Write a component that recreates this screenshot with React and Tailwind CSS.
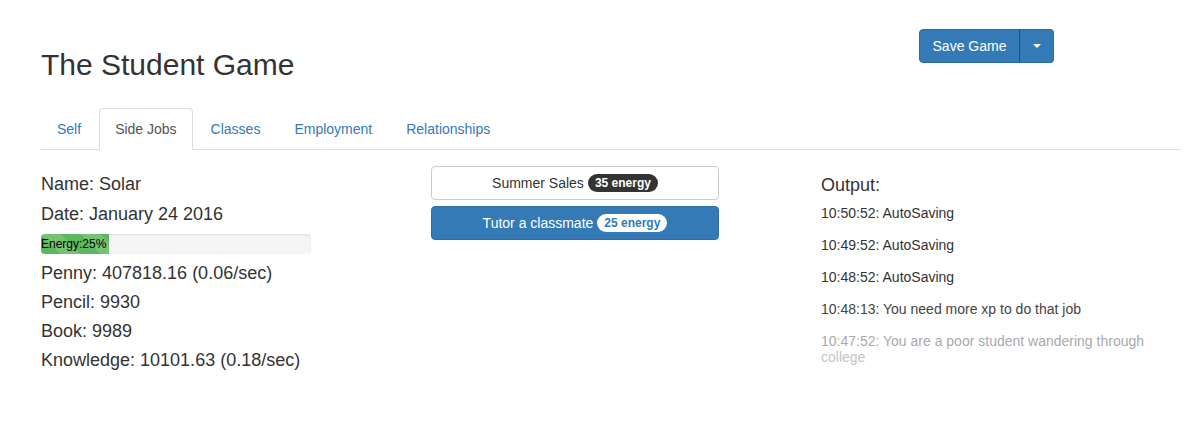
const tabs = ["Self", "Side Jobs", "Classes", "Employment", "Relationships"];

const stats = [
  "Penny: 407818.16 (0.06/sec)",
  "Pencil: 9930",
  "Book: 9989",
  "Knowledge: 10101.63 (0.18/sec)",
];

const log = [
  { text: "10:50:52: AutoSaving", color: "text-[#333]" },
  { text: "10:49:52: AutoSaving", color: "text-[#333]" },
  { text: "10:48:52: AutoSaving", color: "text-[#333]" },
  { text: "10:48:13: You need more xp to do that job", color: "text-[#444]" },
];

const App = () => {
  return (
    <div className="w-[1200px] h-[438px] bg-white text-[#333] font-['Liberation_Sans',Arial,sans-serif] text-[14px] leading-[20px] overflow-hidden">
      <div className="ml-[41px] w-[1140px]">
        <div className="relative h-[108px]">
          <h1 className="absolute left-0 top-[48px] text-[30px] leading-[33px] font-normal">
            The Student Game
          </h1>
          <div className="absolute left-[878px] top-[29px] flex">
            <button className="h-[34px] w-[101px] bg-[#337ab7] border border-[#2e6da4] text-white rounded-l-[4px]">
              Save Game
            </button>
            <button className="h-[34px] w-[35px] bg-[#337ab7] border border-[#2e6da4] border-l-[#204d74] -ml-px text-white rounded-r-[4px] flex items-center justify-center">
              <span className="w-0 h-0 border-l-[4px] border-r-[4px] border-t-[4px] border-l-transparent border-r-transparent border-t-white"></span>
            </button>
          </div>
        </div>

        <ul className="flex border-b border-[#ddd] h-[42px]">
          {tabs.map((t) => (
            <li key={t} className="mr-[2px] -mb-px">
              {t === "Side Jobs" ? (
                <span className="block px-[15px] py-[10px] border border-[#ddd] border-b-white bg-white rounded-t-[4px] text-[#555]">
                  {t}
                </span>
              ) : (
                <span className="block px-[15px] py-[10px] border border-transparent text-[#337ab7]">
                  {t}
                </span>
              )}
            </li>
          ))}
        </ul>

        <div className="flex pt-[16px]">
          <div className="w-[390px] pt-[8px]">
            <div className="text-[18px] leading-[20px]">Name: Solar</div>
            <div className="text-[18px] leading-[20px] mt-[10px]">Date: January 24 2016</div>
            <div className="mt-[10px] w-[270px] h-[20px] bg-[#f5f5f5] rounded-[4px] overflow-hidden shadow-[inset_0_1px_2px_rgba(0,0,0,0.1)]">
              <div className="w-[25%] h-full bg-[#5cb85c] bg-[linear-gradient(45deg,rgba(255,255,255,0.15)_25%,transparent_25%,transparent_50%,rgba(255,255,255,0.15)_50%,rgba(255,255,255,0.15)_75%,transparent_75%,transparent)] bg-[length:40px_40px] text-[12px] leading-[20px] text-black whitespace-nowrap">
                Energy:25%
              </div>
            </div>
            <div className="mt-[9px] flex flex-col gap-[9px]">
              {stats.map((s) => (
                <div key={s} className="text-[18px] leading-[20px]">
                  {s}
                </div>
              ))}
            </div>
          </div>

          <div className="w-[390px] flex flex-col gap-[6px]">
            <button className="w-[288px] h-[34px] border border-[#ccc] bg-white rounded-[4px] flex items-center justify-center gap-[4px] text-[#333]">
              Summer Sales
              <span className="bg-[#333] text-white text-[12px] font-bold leading-[12px] px-[7px] py-[3px] rounded-[10px]">
                35 energy
              </span>
            </button>
            <button className="w-[288px] h-[34px] border border-[#2e6da4] bg-[#337ab7] rounded-[4px] flex items-center justify-center gap-[4px] text-white">
              Tutor a classmate
              <span className="bg-white text-[#337ab7] text-[12px] font-bold leading-[12px] px-[7px] py-[3px] rounded-[10px]">
                25 energy
              </span>
            </button>
          </div>

          <div className="w-[350px] pt-[9px]">
            <div className="text-[18px] leading-[20px]">Output:</div>
            <div className="mt-[10px] flex flex-col gap-[16px]">
              {log.map((l) => (
                <div key={l.text} className={`leading-[16px] ${l.color}`}>
                  {l.text}
                </div>
              ))}
              <div className="leading-[16px] text-[#aaa]">
                10:47:52: You are a poor student wandering through{" "}
                <span className="text-[#c4c4c4]">college</span>
              </div>
            </div>
          </div>
        </div>
      </div>
    </div>
  );
};

export default App;
